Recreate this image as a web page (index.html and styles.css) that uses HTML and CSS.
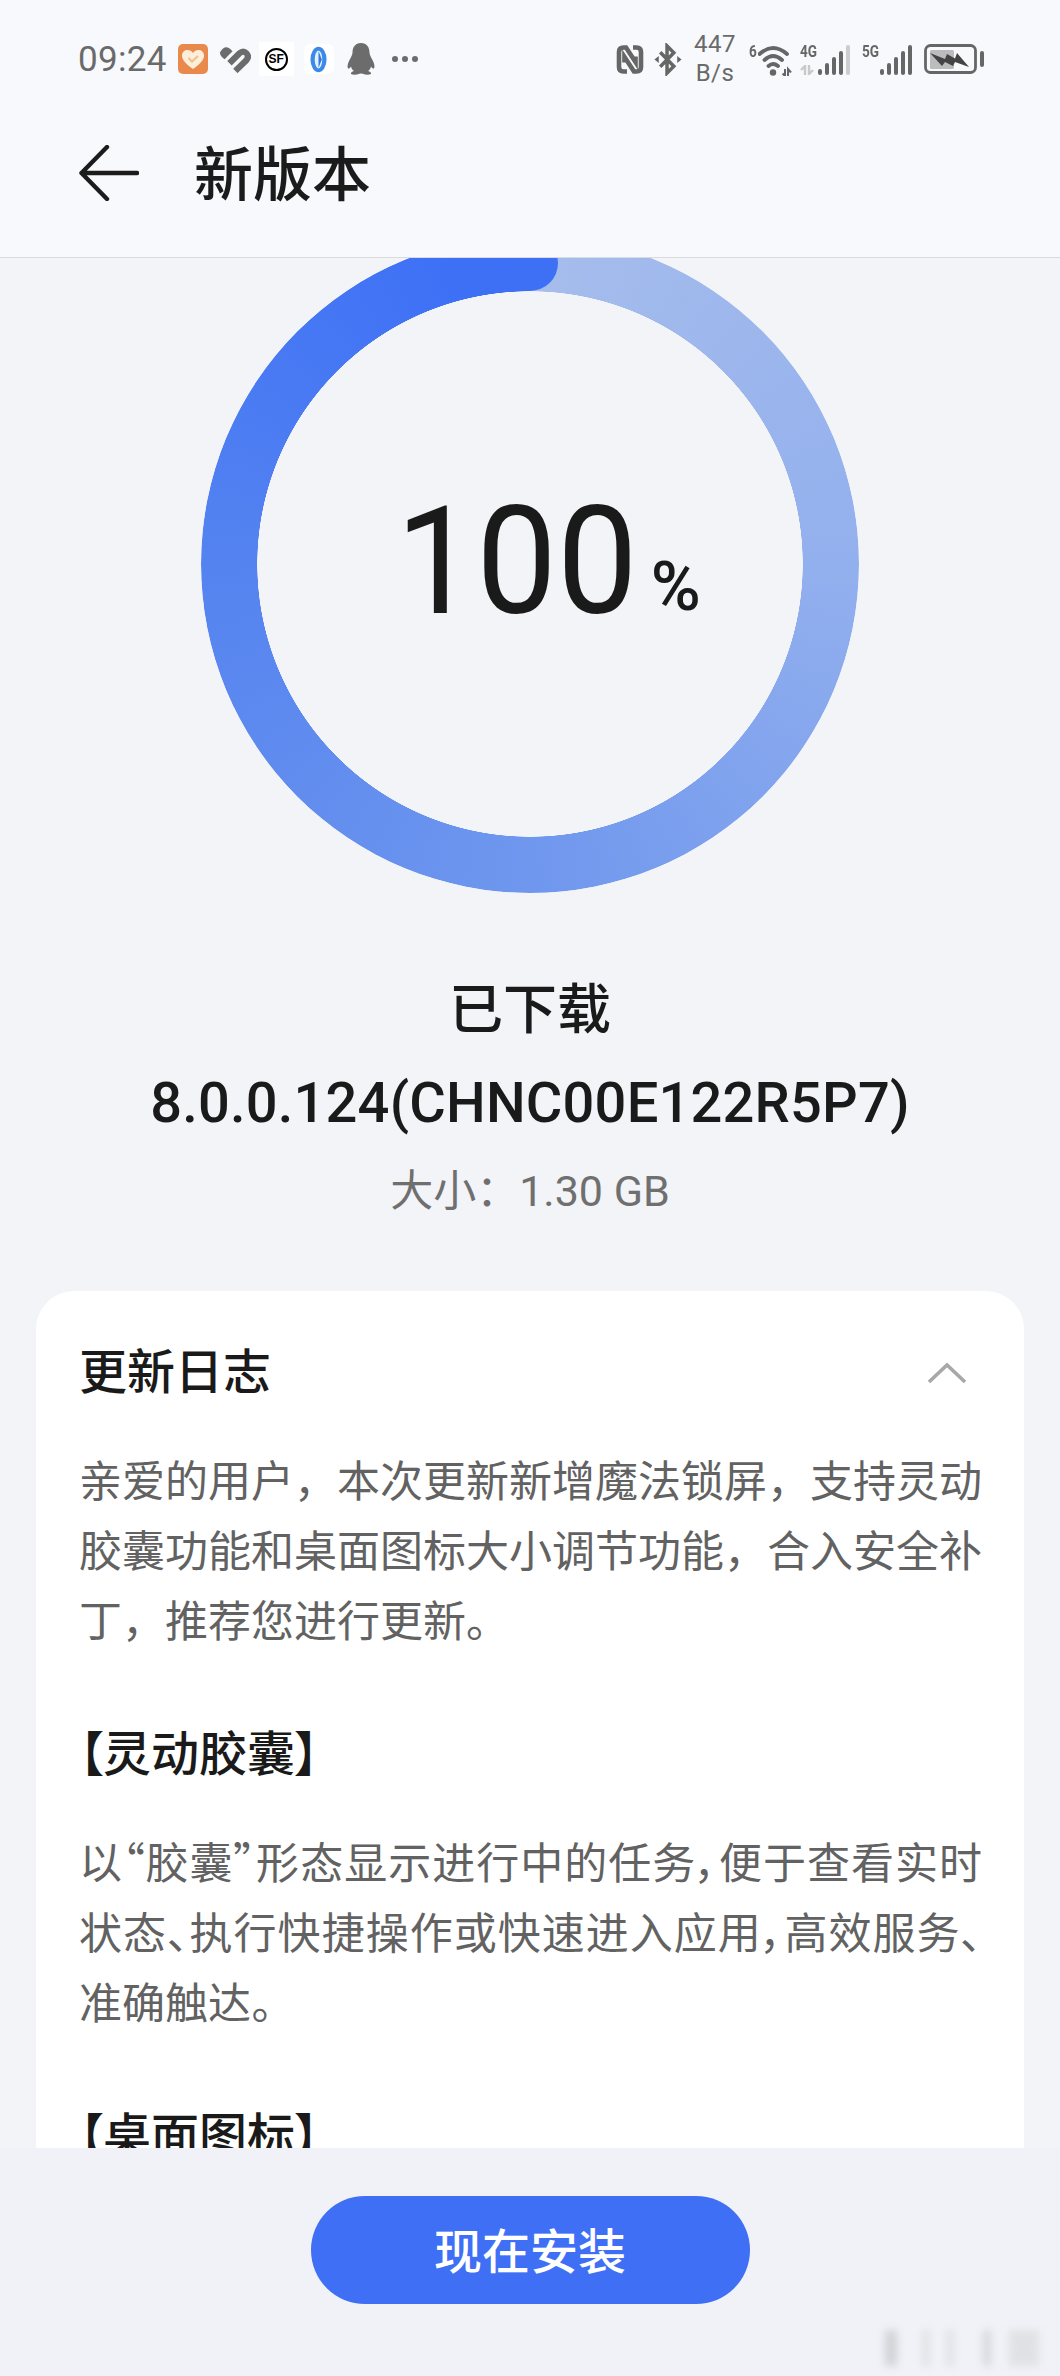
FILE: index.html
```html
<!DOCTYPE html>
<html lang="zh-CN">
<head>
<meta charset="utf-8">
<title>新版本</title>
<link rel="stylesheet" href="styles.css">
</head>
<body>
<div class="page">
  <header class="topbar">
    <div class="status">
      <div class="status-left">
        <span class="clock">09:24</span>
        <svg class="ic ic-health" viewBox="0 0 30 30"><rect width="30" height="30" rx="5" fill="#e98a4c"/><path d="M15 25C8 20 4 16 4 11.500C4 8 6.800 6 9.500 6C11.800 6 13.800 7.200 15 9C16.200 7.200 18.200 6 20.500 6C23.200 6 26 8 26 11.500C26 16 22 20 15 25Z" fill="#fdeed9"/><path d="M10.500 14L14 17.500L20 12" fill="none" stroke="#efc08f" stroke-width="2"/></svg>
        <svg class="ic ic-stripe" viewBox="0 0 90 78"><path d="M2 18Q12 0 24 4Q30 6 38 15L15 38Q0 28 2 18Z" fill="#6c6c6c"/><path d="M29 50L58 21Q69 11 78 21Q87 31 77 42L46 72" fill="none" stroke="#6c6c6c" stroke-width="18"/></svg>
        <span class="chip chip-sf"><span class="sf-mark">SF</span></span>
        <span class="chip chip-blue"><svg class="ic-oval" viewBox="0 0 18 28"><ellipse cx="9" cy="14" rx="8.500" ry="13.500" fill="#3b8be6"/><ellipse cx="9" cy="14" rx="4" ry="9.500" fill="#e2f0ff"/><path d="M9 5L12.500 14L9 23Z" fill="#2f78dc"/></svg></span>
        <svg class="ic ic-qq" viewBox="0 0 28 32"><path d="M14 0C8 0 5.500 4.500 5.500 9.500C5.500 12 4 14 2.500 17C0.500 21 0 24 1 25.500C2 26 3.500 24.500 4 23.500C4.500 25.500 5.500 27 7 28C5 28.500 3.500 29.500 4 31Q6 32 10 31.500Q12.500 30.500 14 30.500Q15.500 30.500 18 31.500Q22 32 24 31C24.500 29.500 23 28.500 21 28C22.500 27 23.500 25.500 24 23.500C24.500 24.500 26 26 27 25.500C28 24 27.500 21 25.500 17C24 14 22.500 12 22.500 9.500C22.500 4.500 20 0 14 0Z" fill="#6c6c6c"/></svg>
        <span class="more"><i></i><i></i><i></i></span>
      </div>
      <div class="status-right">
        <svg class="ic ic-nfc" viewBox="0 0 28 29"><path d="M11 26.500H7.500Q3 26.500 3 22V7Q3 2.500 7.500 2.500H10L19.500 17V11.500" fill="none" stroke="#666" stroke-width="4.600"/><path d="M17 2.500H20.500Q25 2.500 25 7V22Q25 26.500 20.500 26.500H18L8.500 12V17.500" fill="none" stroke="#666" stroke-width="4.600"/></svg>
        <svg class="ic ic-bt" viewBox="0 0 28 34"><path d="M6 9.500L20 24L13 31V3L20 10L6 24.500" fill="none" stroke="#666" stroke-width="3.600"/><path d="M0 17L4.500 13.500V20.500ZM28 17L23.500 13.500V20.500Z" fill="#666"/></svg>
        <span class="speed"><span>447</span><span>B/s</span></span>
        <span class="net net-wifi">
          <span class="net-tag">6</span>
          <svg class="ic-wifi" viewBox="0 0 34 32"><path d="M1.500 10Q15 -2 29 10M6.500 16Q15 8 24 16M10.500 22Q15 18 20 22" fill="none" stroke="#666" stroke-width="3.800" stroke-linecap="round"/><circle cx="15" cy="28.500" r="3.200" fill="#666"/><path d="M27 25V32L24.500 29.500M30 32V25L33 28.500" stroke="#666" stroke-width="2" fill="none"/></svg>
        </span>
        <span class="net net-4g">
          <span class="net-stack">
            <span class="net-tag">4G</span>
            <svg class="ic-arrows" viewBox="0 0 14 10"><path d="M5 10V1L1 5M9 0V9L13 5" fill="none" stroke="#c9c9c9" stroke-width="2.400"/></svg>
          </span>
          <span class="bars"><i class="b1"></i><i class="b2"></i><i class="b3"></i><i class="b4"></i><i class="b5 dim"></i></span>
        </span>
        <span class="net net-5g">
          <span class="net-stack"><span class="net-tag">5G</span></span>
          <span class="bars"><i class="b1"></i><i class="b2"></i><i class="b3"></i><i class="b4"></i><i class="b5"></i></span>
        </span>
        <svg class="ic-batt" viewBox="0 0 60 30"><rect x="1.500" y="1.500" width="50" height="27" rx="5" fill="none" stroke="#666" stroke-width="2.800"/><rect x="6" y="6" width="24" height="19" rx="1.500" fill="#bcbcbc"/><rect x="56" y="7" width="4" height="16" rx="2" fill="#666"/><path d="M6 9L21 15L23 10L31 14.500L33 9L45 23L31 18L29 22L21 18L18 22Z" fill="#444"/></svg>
      </div>
    </div>
    <div class="titlebar">
      <svg class="back" viewBox="0 0 60 56"><path d="M28 2L2.500 28L28 54M2.500 28H58" fill="none" stroke="#1c1c1c" stroke-width="4.400" stroke-linecap="round" stroke-linejoin="round"/></svg>
      <h1 class="title">新版本</h1>
    </div>
  </header>

  <main class="content">
    <div class="ring">
      <span class="ring-cap"></span>
      <div class="ring-value"><span class="ring-num">100</span><span class="ring-unit">%</span></div>
    </div>
    <p class="state">已下载</p>
    <p class="version">8.0.0.124(CHNC00E122R5P7)</p>
    <p class="size">大小：1.30 GB</p>
    <section class="card">
      <div class="card-head">
        <h2 class="card-title">更新日志</h2>
        <svg class="chevron" viewBox="0 0 40 22"><path d="M2 20L20 3L38 20" fill="none" stroke="#a8a8a8" stroke-width="3.600"/></svg>
      </div>
      <p class="para first">亲爱的用户，本次更新新增魔法锁屏，支持灵动胶囊功能和桌面图标大小调节功能，合入安全补丁，推荐您进行更新。</p>
      <h3 class="sub">【灵动胶囊】</h3>
      <p class="para tight">以“胶囊”形态显示进行中的任务，便于查看实时状态、执行快捷操作或快速进入应用，高效服务、准确触达。</p>
      <h3 class="sub">【桌面图标】</h3>
    </section>
  </main>

  <footer class="actions">
    <button class="install">现在安装</button>
    <span class="watermark"></span>
  </footer>
</div>
</body>
</html>
```
FILE: styles.css
```css
* { box-sizing: border-box; }
html, body { margin: 0; padding: 0; }
body {
  font-family: "Noto Sans CJK SC", Roboto, sans-serif;
  background: #f2f4f8;
  color: #1a1a1a;
}
p, h1, h2, h3 { margin: 0; font-weight: 400; }

.page {
  position: relative;
  width: 1060px;
  height: 2376px;
  display: flex;
  flex-direction: column;
  overflow: hidden;
}

/* top bar overlays the scrolled content */
.topbar {
  position: absolute;
  top: 0;
  left: 0;
  right: 0;
  height: 258px;
  z-index: 2;
  background: #f8f9fc;
  border-bottom: 1px solid #d9dbdf;
}
.status {
  display: flex;
  justify-content: space-between;
  align-items: center;
  height: 58px;
  margin-top: 30px;
  padding: 0 76px 0 78px;
}
.status-left, .status-right { display: flex; align-items: center; }
.clock {
  font: 400 35px/1 Roboto, sans-serif;
  letter-spacing: 0.300px;
  color: #6a6a6a;
  margin-right: 11px;
}
.ic { display: block; flex: none; }
.ic-health { width: 30px; height: 30px; margin-right: 11px; }
.ic-stripe { width: 32px; height: 27px; margin-right: 8px; }
.chip {
  display: flex;
  align-items: center;
  justify-content: center;
  background: #fff;
  flex: none;
}
.chip-sf { width: 35px; height: 34px; margin-right: 10px; }
.sf-mark {
  width: 23px;
  height: 23px;
  border: 2.500px solid #000;
  border-radius: 50%;
  font: 700 12px/18px "Liberation Sans", sans-serif;
  text-align: center;
  color: #000;
}
.chip-blue { width: 30px; height: 30px; border-radius: 6px; margin-right: 13px; }
.ic-oval { width: 17px; height: 27px; }
.ic-qq { width: 28px; height: 32px; margin-right: 17px; }
.more { display: flex; gap: 4px; }
.more i { width: 6px; height: 6px; border-radius: 50%; background: #6c6c6c; }

.ic-nfc { width: 28px; height: 29px; margin-right: 10px; }
.ic-bt { width: 28px; height: 33px; margin-right: 13px; }
.speed {
  display: flex;
  flex-direction: column;
  align-items: center;
  font: 400 24px/29px Roboto, sans-serif;
  letter-spacing: 0.500px;
  color: #6a6a6a;
  width: 40px;
  margin-right: 14px;
}
.net { display: flex; align-items: flex-end; height: 31px; flex: none; }
.net-wifi { width: 43px; margin-right: 8px; align-items: flex-start; }
.net-4g { width: 50px; margin-right: 12px; }
.net-5g { width: 49px; margin-right: 13px; }
.net-stack {
  display: flex;
  flex-direction: column;
  justify-content: space-between;
  width: 18px;
  height: 100%;
  flex: none;
}
.net-tag {
  display: block;
  width: 9px;
  flex: none;
  font: 700 17px/15px Roboto, sans-serif;
  color: #666;
  white-space: nowrap;
  transform: scaleX(0.8);
  transform-origin: left top;
}
.ic-arrows { display: block; width: 14px; height: 10px; }
.ic-wifi { width: 34px; height: 32px; display: block; flex: none; }
.bars { display: flex; align-items: flex-end; gap: 3px; height: 30px; flex: none; }
.bars i { width: 4px; border-radius: 2px; background: #666; display: block; }
.bars .b1 { height: 6px; }
.bars .b2 { height: 12px; }
.bars .b3 { height: 18px; }
.bars .b4 { height: 24px; }
.bars .b5 { height: 30px; }
.bars .dim { background: #cdcdcd; }
.ic-batt { width: 60px; height: 30px; display: block; flex: none; }

.titlebar {
  display: flex;
  align-items: center;
  height: 64px;
  margin-top: 53px;
  padding-left: 79px;
}
.back { width: 60px; height: 56px; flex: none; margin-right: 55px; }
.title {
  font-size: 59px;
  line-height: 60px;
  margin-bottom: 5px;
  font-weight: 500;
  color: #1b1b1b;
}

/* scrolled content */
.content {
  flex: 1;
  min-height: 0;
  overflow: hidden;
  padding-top: 235px;
}
.ring {
  position: relative;
  width: 658px;
  height: 658px;
  margin: 0 auto;
  border-radius: 50%;
  display: flex;
  align-items: center;
  justify-content: center;
}
.ring::before {
  content: "";
  position: absolute;
  inset: 0;
  border-radius: 50%;
  background: conic-gradient(#a6bdec 0deg, #93b0ee 90deg, #6f97ee 180deg, #5483f0 270deg, #3e70f6 345deg, #3e70f6 360deg);
  -webkit-mask: radial-gradient(circle closest-side, transparent 272.500px, #000 273px);
  mask: radial-gradient(circle closest-side, transparent 272.500px, #000 273px);
}
/* round end of the progress arc */
.ring-cap {
  position: absolute;
  top: 0;
  left: 301px;
  width: 56px;
  height: 56px;
  border-radius: 50%;
  background: #3e70f6;
}
.ring-value {
  position: relative;
  margin-top: -6px;
  margin-left: 24px;
  white-space: nowrap;
  font-family: Roboto, sans-serif;
  color: #1a1a1a;
  line-height: 1;
}
.ring-num {
  display: inline-block;
  font-size: 151px;
  font-weight: 400;
  transform: scaleX(0.95);
  transform-origin: right center;
}
.ring-unit {
  display: inline-block;
  font-size: 68px;
  font-weight: 500;
  margin-left: 13px;
  vertical-align: 3px;
}

.state {
  margin-top: 78px;
  font-size: 54px;
  line-height: 70px;
  font-weight: 500;
  text-align: center;
}
.version {
  margin-top: 27px;
  font-family: Roboto, sans-serif;
  font-size: 56px;
  letter-spacing: 0.200px;
  line-height: 70px;
  font-weight: 500;
  text-align: center;
}
.size {
  margin-top: 23px;
  font-size: 43px;
  line-height: 60px;
  text-align: center;
  font-family: Roboto, "Noto Sans CJK SC", sans-serif;
  color: #6f6f6f;
}

.card {
  margin: 70px 36px 0;
  padding: 47px 42px 0 43px;
  background: #fff;
  border-radius: 38px 38px 0 0;
}
.card-head {
  display: flex;
  align-items: center;
  justify-content: space-between;
  height: 60px;
}
.card-title { font-size: 48px; line-height: 60px; font-weight: 500; }
.chevron { width: 40px; height: 22px; margin: 10px 15px 0 0; display: block; }
.para {
  margin-top: 45px;
  font-size: 43px;
  line-height: 70px;
  color: #626262;
  text-align: justify;
  font-family: "Noto Sans CJK SC", sans-serif;
}
.para.first { margin-top: 45px; }
.para.tight { font-feature-settings: "palt"; }
.sub {
  margin-top: 67px;
  font-size: 48px;
  line-height: 60px;
  font-weight: 500;
  font-feature-settings: "palt";
}

.actions {
  position: relative;
  height: 228px;
  flex: none;
  padding-top: 48px;
  background: #f0f2f7;
  display: flex;
  justify-content: center;
  align-items: flex-start;
}
.install {
  width: 439px;
  height: 108px;
  padding: 0 0 5px;
  border: 0;
  border-radius: 54px;
  background: #3f6ff5;
  color: #fff;
  font-family: "Noto Sans CJK SC", sans-serif;
  font-size: 48px;
  font-weight: 500;
}
/* blurred site watermark over the corner */
.watermark {
  position: absolute;
  right: 19px;
  bottom: 10px;
  width: 162px;
  height: 36px;
  filter: blur(4px);
  opacity: 0.3;
  background: linear-gradient(90deg, transparent 0 6px, #888 6px 18px, transparent 18px 44px, #aaa 44px 50px, transparent 50px 68px, #aaa 68px 74px, transparent 74px 104px, #999 104px 112px, transparent 112px 130px, #bbb 130px 136px, #bbb 152px 160px, transparent 160px);
}
```
